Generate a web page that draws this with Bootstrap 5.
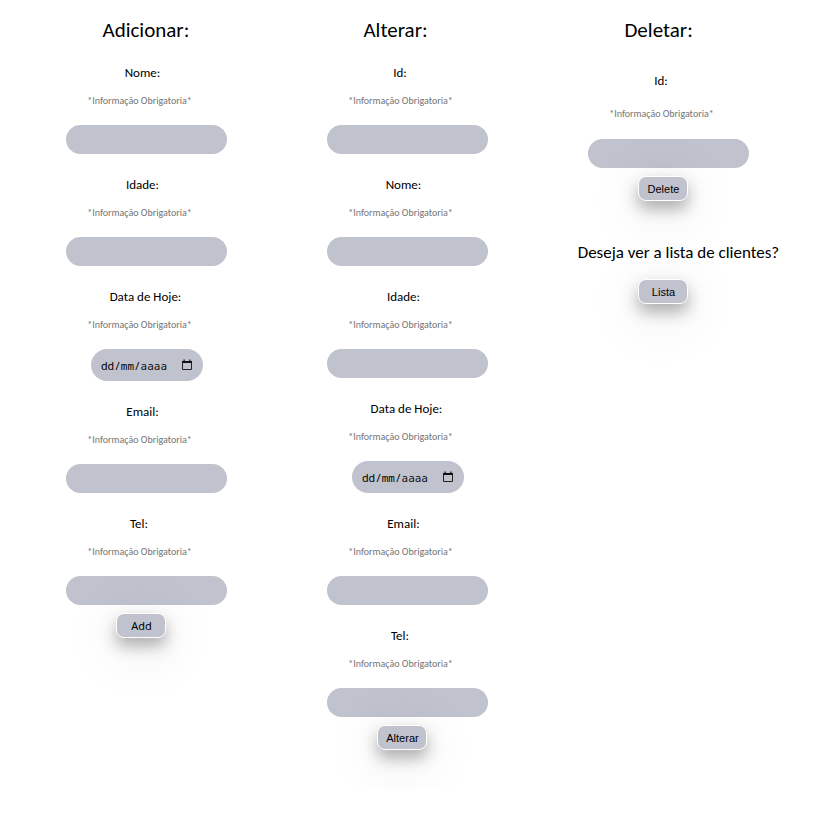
<!DOCTYPE html>
<html lang="pt-BR">
<head>
<meta charset="utf-8">
<meta name="viewport" content="width=device-width, initial-scale=1">
<title>Clientes</title>
<link href="https://cdn.jsdelivr.net/npm/bootstrap@5.3.0/dist/css/bootstrap.min.css" rel="stylesheet">
<style>
body{font-family:Carlito,Calibri,Lato,sans-serif;color:#000;background:#fff}
.page{padding:18px 29px 40px 16px}
.title{font-size:21px;line-height:24px;font-weight:400;margin-bottom:23px;width:88px;white-space:nowrap}
.field{display:flex;flex-direction:column;align-items:center;margin-bottom:23px}
.field-name{font-size:13px;line-height:16px;padding-right:8px;margin-bottom:14px}
.field-name.wide{padding-right:2px}
.field-name.short{padding-right:15px}
.hint{font-size:10px;line-height:12px;color:#757575;padding-right:14px;margin-bottom:18px}
.pill{background:#c0c2ce;border:0;border-radius:16px;height:29px;width:161px;padding:0 12px;font-size:12px;outline-offset:2px}
.date-box{background:#c0c2ce;border-radius:16px;height:32px;width:112px;padding:0 10px;margin-left:1px}
.date-box input{background:none;border:0;padding:0;width:72px;font:11px "Noto Sans Mono","DejaVu Sans Mono",monospace;color:#000}
.date-box input::placeholder{color:#000;opacity:1}
.date-box button{background:none;border:0;padding:0}
.action{width:50px;height:25px;padding:0;background:#c0c2ce;border:1px solid #fff;border-radius:8px;font:11px/16px "Liberation Sans",Arial,sans-serif;color:#000;box-shadow:0 8px 16px rgba(0,0,0,.3),0 10px 60px rgba(0,0,0,.14);margin:-15px 10px 0 0}
.action.soft{font:11px/16px "Noto Sans",sans-serif}
.single{padding-top:8px}
.single .field-name{margin-bottom:19px}
.single .hint{margin-bottom:19px}
.question{font-size:17px;line-height:20px;padding-left:20px;margin:42px 0 16px;white-space:nowrap}
.list-action{margin-top:0}
</style>
<script src="https://cdn.jsdelivr.net/npm/bootstrap@5.3.0/dist/js/bootstrap.bundle.min.js"></script>
</head>
<body>
<main class="container-fluid page">
<div class="row g-0">
<form class="col-4 d-flex flex-column align-items-center">
<h1 class="title">Adicionar:</h1>
<div class="field"><label class="field-name" for="a1">Nome:</label><span class="hint">*Informação Obrigatoria*</span><input class="pill" id="a1" type="text"></div>
<div class="field"><label class="field-name" for="a2">Idade:</label><span class="hint">*Informação Obrigatoria*</span><input class="pill" id="a2" type="text"></div>
<div class="field"><label class="field-name wide" for="a3">Data de Hoje:</label><span class="hint">*Informação Obrigatoria*</span>
<div class="date-box d-flex align-items-center justify-content-between"><input id="a3" type="text" placeholder="dd/mm/aaaa"><button type="button" class="d-flex" aria-label="Abrir calendário"><svg width="12" height="12" viewBox="0 0 12 12"><path d="M1.5 2.5h9v8h-9z" fill="none" stroke="#222" stroke-width="1"/><path d="M1 2h10v2H1zM2.5.5h1.2V2H2.5zM8.3.5h1.2V2H8.3z" fill="#111"/></svg></button></div></div>
<div class="field"><label class="field-name" for="a4">Email:</label><span class="hint">*Informação Obrigatoria*</span><input class="pill" id="a4" type="email"></div>
<div class="field"><label class="field-name short" for="a5">Tel:</label><span class="hint">*Informação Obrigatoria*</span><input class="pill" id="a5" type="tel"></div>
<button type="button" class="action soft">Add</button>
</form>
<form class="col-4 d-flex flex-column align-items-center">
<h1 class="title">Alterar:</h1>
<div class="field"><label class="field-name short" for="b0">Id:</label><span class="hint">*Informação Obrigatoria*</span><input class="pill" id="b0" type="text"></div>
<div class="field"><label class="field-name" for="b1">Nome:</label><span class="hint">*Informação Obrigatoria*</span><input class="pill" id="b1" type="text"></div>
<div class="field"><label class="field-name" for="b2">Idade:</label><span class="hint">*Informação Obrigatoria*</span><input class="pill" id="b2" type="text"></div>
<div class="field"><label class="field-name wide" for="b3">Data de Hoje:</label><span class="hint">*Informação Obrigatoria*</span>
<div class="date-box d-flex align-items-center justify-content-between"><input id="b3" type="text" placeholder="dd/mm/aaaa"><button type="button" class="d-flex" aria-label="Abrir calendário"><svg width="12" height="12" viewBox="0 0 12 12"><path d="M1.5 2.5h9v8h-9z" fill="none" stroke="#222" stroke-width="1"/><path d="M1 2h10v2H1zM2.5.5h1.2V2H2.5zM8.3.5h1.2V2H8.3z" fill="#111"/></svg></button></div></div>
<div class="field"><label class="field-name" for="b4">Email:</label><span class="hint">*Informação Obrigatoria*</span><input class="pill" id="b4" type="email"></div>
<div class="field"><label class="field-name short" for="b5">Tel:</label><span class="hint">*Informação Obrigatoria*</span><input class="pill" id="b5" type="tel"></div>
<button type="button" class="action">Alterar</button>
</form>
<form class="col-4 d-flex flex-column align-items-center">
<h1 class="title">Deletar:</h1>
<div class="field single"><label class="field-name short" for="c0">Id:</label><span class="hint">*Informação Obrigatoria*</span><input class="pill" id="c0" type="text"></div>
<button type="button" class="action">Delete</button>
<p class="question">Deseja ver a lista de clientes?</p>
<button type="button" class="action list-action">Lista</button>
</form>
</div>
</main>
</body>
</html>
